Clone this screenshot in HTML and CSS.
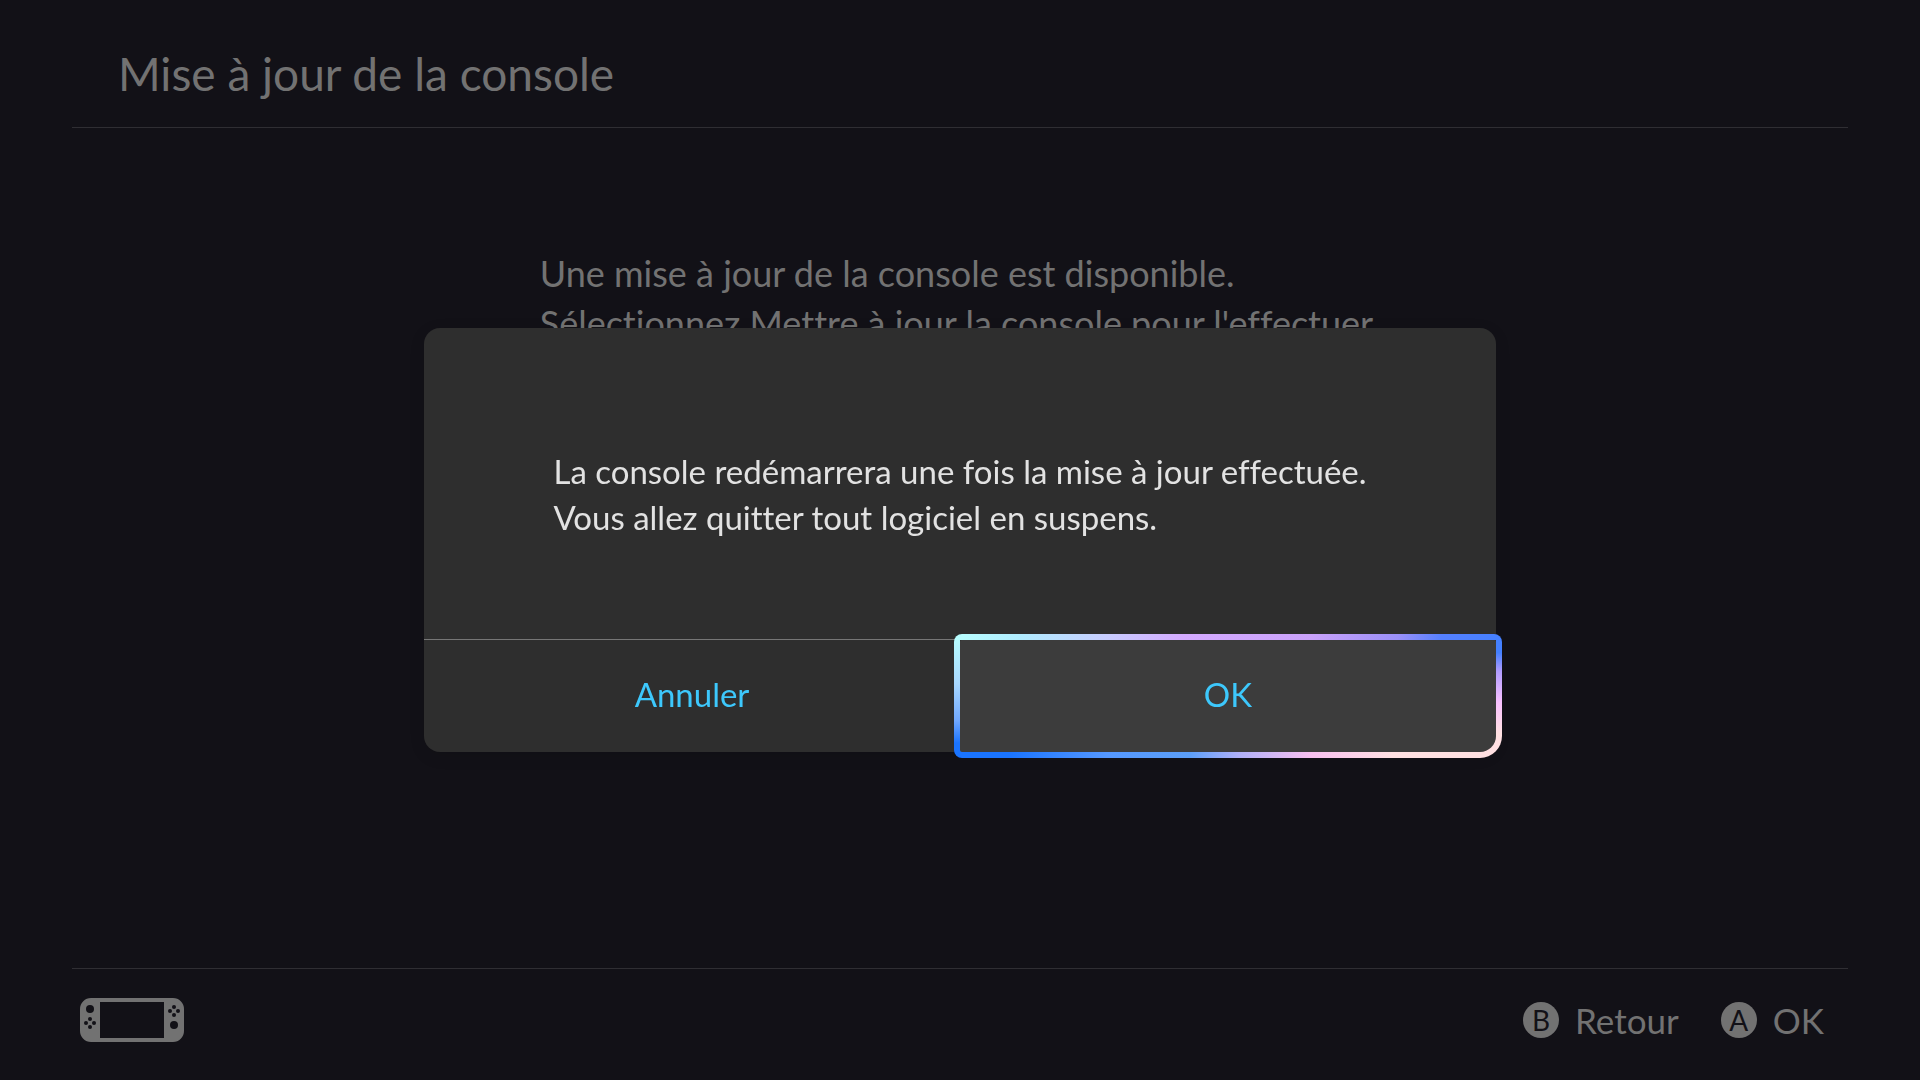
FILE: index.html
```
<!DOCTYPE html>
<html lang="fr">
<head>
    <meta charset="UTF-8">
    <meta name="viewport" content="width=device-width, initial-scale=1.0">
    <title>Mise à jour de la console</title>
    <link rel="stylesheet" href="styles.css">
</head>
<body>
    <header class="header">
        <h1>Mise à jour de la console</h1>
    </header>

    <main class="content">
        <p>Une mise à jour de la console est disponible.<br>
        Sélectionnez Mettre à jour la console pour l'effectuer.</p>
    </main>

    <footer class="footer">
        <svg class="console-icon" viewBox="0 0 104 44" aria-hidden="true">
            <path fill="#727272" fill-rule="evenodd" d="M11 0H93A11 11 0 0 1 104 11V33A11 11 0 0 1 93 44H11A11 11 0 0 1 0 33V11A11 11 0 0 1 11 0ZM20 4V40H84V4Z"/>
            <g fill="#121117">
                <circle cx="10" cy="11" r="4"/>
                <circle cx="10" cy="21" r="2"/>
                <circle cx="6" cy="25" r="2"/>
                <circle cx="14" cy="25" r="2"/>
                <circle cx="10" cy="29" r="2"/>
                <circle cx="94" cy="9" r="2"/>
                <circle cx="90" cy="13" r="2"/>
                <circle cx="98" cy="13" r="2"/>
                <circle cx="94" cy="17" r="2"/>
                <circle cx="94" cy="27" r="4"/>
            </g>
        </svg>
        <div class="hints">
            <button class="hint" type="button"><span class="key">B</span>Retour</button>
            <button class="hint" type="button"><span class="key">A</span>OK</button>
        </div>
    </footer>

    <div class="overlay">
        <div class="dialog" role="dialog" aria-modal="true" aria-labelledby="dialog-text">
            <div class="dialog-body">
                <p id="dialog-text">La console redémarrera une fois la mise à jour effectuée.<br>
                Vous allez quitter tout logiciel en suspens.</p>
            </div>
            <div class="dialog-buttons">
                <button class="dialog-btn" type="button">Annuler</button>
                <button class="dialog-btn selected" type="button">OK</button>
            </div>
        </div>
    </div>
</body>
</html>
```
FILE: styles.css
```
* {
    box-sizing: border-box;
}
body {
    font-family: 'Lato', sans-serif;
    font-variant-ligatures: none;
    background-color: #121117;
    color: #727272;
    margin: 0;
    padding: 0 72px;
    min-height: 100vh;
    display: flex;
    flex-direction: column;
}
h1, p {
    margin: 0;
    font-weight: normal;
}
button {
    font-family: inherit;
    color: inherit;
    background: none;
    border: none;
    padding: 0;
    cursor: pointer;
}
.header {
    display: flex;
    align-items: center;
    height: 128px;
    padding: 20px 46px 0;
    border-bottom: 1px solid #2f2e33;
}
.header h1 {
    font-size: 46px;
    line-height: 56px;
}
.content {
    flex: 1;
    display: flex;
    justify-content: center;
    padding-top: 120px;
}
.content p {
    font-size: 36px;
    line-height: 50px;
}
.footer {
    display: flex;
    align-items: center;
    justify-content: space-between;
    height: 112px;
    padding: 0 24px 10px 8px;
    border-top: 1px solid #2f2e33;
}
.console-icon {
    width: 104px;
    height: 44px;
}
.hints {
    display: flex;
    gap: 42px;
}
.hint {
    display: flex;
    align-items: center;
    gap: 16px;
    font-size: 35px;
    line-height: 40px;
}
.key {
    display: flex;
    align-items: center;
    justify-content: center;
    width: 36px;
    height: 36px;
    border-radius: 50%;
    background-color: #727272;
    color: #121117;
    font-size: 28px;
}
.overlay {
    position: fixed;
    inset: 0;
    display: flex;
    align-items: center;
    justify-content: center;
}
.dialog {
    width: 1072px;
    max-width: 90%;
    background-color: #2e2e2e;
    border-radius: 16px;
    box-shadow: 0 4px 16px rgba(0, 0, 0, 0.1);
}
.dialog-body {
    display: flex;
    justify-content: center;
    padding: 120px 48px 99px;
    border-bottom: 1px solid #767676;
    color: #e2e2e2;
}
.dialog-body p {
    font-size: 33px;
    line-height: 46px;
}
.dialog-buttons {
    display: flex;
}
.dialog-btn {
    flex: 1;
    height: 112px;
    padding-bottom: 4px;
    font-size: 33px;
    color: #3dc8fc;
}
/* border drawn as four gradient strips around the padding box */
.dialog-btn.selected {
    height: 124px;
    margin: -6px;
    border: 6px solid transparent;
    border-radius: 8px 8px 22px 8px;
    background:
        linear-gradient(#3c3c3c, #3c3c3c) padding-box,
        linear-gradient(90deg, #b8ffff, #b0ecff 12%, #c8ccff 28%, #d4aaff 42%, #caa2fa 65%, #9a90f8 81%, #5580ff 89%, #4480ff) top / 100% 6px no-repeat border-box,
        linear-gradient(#b8ffff, #a8d8ff 40%, #70a8ff 70%, #1a74ff 88%) left / 6px 100% no-repeat border-box,
        linear-gradient(#4480ff 15%, #b09cff 30%, #f8c0ff 55%, #ffe0e2 80%) right / 6px 100% no-repeat border-box,
        linear-gradient(90deg, #1a74ff 10%, #5598ff 28%, #5c9ff8 43%, #b0b0f8 52%, #f8c0f0 65%, #ffe0e2 80%) bottom / 100% 24px no-repeat border-box;
}
```
